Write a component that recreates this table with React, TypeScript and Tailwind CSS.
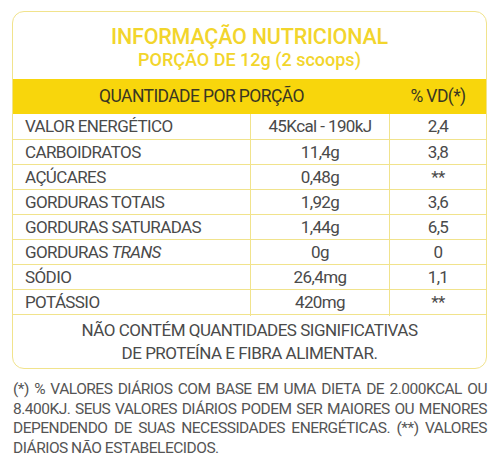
import React from "react";

type Row = {
  name: React.ReactNode;
  qty: string;
  vd: string;
};

const rows: Row[] = [
  { name: "VALOR ENERGÉTICO", qty: "45Kcal - 190kJ", vd: "2,4" },
  { name: "CARBOIDRATOS", qty: "11,4g", vd: "3,8" },
  { name: "AÇÚCARES", qty: "0,48g", vd: "**" },
  { name: "GORDURAS TOTAIS", qty: "1,92g", vd: "3,6" },
  { name: "GORDURAS SATURADAS", qty: "1,44g", vd: "6,5" },
  {
    name: (
      <>
        GORDURAS <i>TRANS</i>
      </>
    ),
    qty: "0g",
    vd: "0",
  },
  { name: "SÓDIO", qty: "26,4mg", vd: "1,1" },
  { name: "POTÁSSIO", qty: "420mg", vd: "**" },
];

const App: React.FC = () => {
  return (
    <div className="w-[500px] h-[465px] bg-white overflow-hidden font-['Roboto',sans-serif] text-[#4a4a4a]">
      <div className="ml-[12px] mr-[13px] mt-[11px] border-[1.5px] border-[#f1e38c] rounded-[12px] overflow-hidden">
        {/* title */}
        <div className="h-[67px] pt-[4px] flex flex-col items-center justify-center text-[#f2d52c]">
          <div className="text-[21.5px] leading-[24px] font-medium tracking-[-0.2px]">
            INFORMAÇÃO NUTRICIONAL
          </div>
          <div className="text-[18px] leading-[21px] font-medium">
            PORÇÃO DE 12g (2 scoops)
          </div>
        </div>

        {/* header band */}
        <div className="h-[35px] bg-[#f8d60c] grid grid-cols-[377px_1fr] items-center text-[#3a3722] text-[17.5px] tracking-[-0.6px]">
          <div className="text-center">QUANTIDADE POR PORÇÃO</div>
          <div className="text-center">% VD(*)</div>
        </div>

        {/* rows */}
        {rows.map((r, i) => (
          <div
            key={i}
            className={`grid grid-cols-[237px_139px_1fr] h-[25px] text-[17px] tracking-[-0.6px] ${
              i > 0 ? "border-t-[1.5px] border-[#f1e38c]" : ""
            }`}
          >
            <div className="pl-[12px] flex items-center">
              <span>{r.name}</span>
            </div>
            <div className="border-l-[1.5px] border-[#f1e38c] flex items-center justify-center">
              {r.qty}
            </div>
            <div className="border-l-[1.5px] border-[#f1e38c] flex items-center justify-center">
              {r.vd}
            </div>
          </div>
        ))}

        {/* note */}
        <div className="h-[54px] border-t-[1.5px] border-[#f1e38c] flex flex-col items-center justify-center text-[17px] leading-[23px] tracking-[-0.5px]">
          <div>NÃO CONTÉM QUANTIDADES SIGNIFICATIVAS</div>
          <div>DE PROTEÍNA E FIBRA ALIMENTAR.</div>
        </div>
      </div>

      {/* footnote */}
      <p className="mx-[13px] mt-[11px] text-[15.5px] leading-[19.5px] text-justify [text-align-last:left] tracking-[-0.5px] text-[#555]">
        (*) % VALORES DIÁRIOS COM BASE EM UMA DIETA DE 2.000KCAL OU
        8.400KJ. SEUS VALORES DIÁRIOS PODEM SER MAIORES OU MENORES
        DEPENDENDO DE SUAS NECESSIDADES ENERGÉTICAS. (**) VALORES
        DIÁRIOS NÃO ESTABELECIDOS.
      </p>
    </div>
  );
};

export default App;
